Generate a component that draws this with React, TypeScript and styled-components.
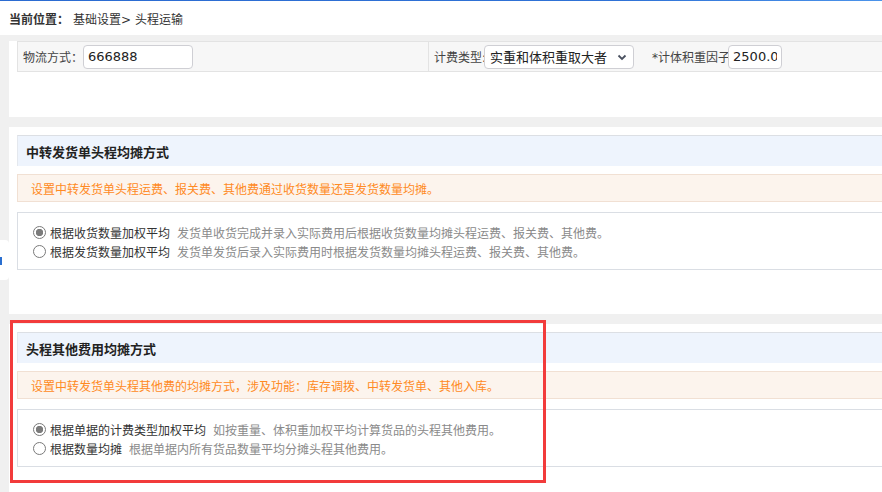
import React, { useState } from "react";
import styled, { createGlobalStyle } from "styled-components";

/**
 * Styles
 */
const GlobalStyle = createGlobalStyle`
  html, body {
    margin: 0;
    padding: 0;
    background: #f0f0f0;
    font-family: "DejaVu Sans", "Noto Sans CJK SC", sans-serif;
    font-size: 12px;
    color: #333;
    overflow: hidden;
  }
  * {
    box-sizing: border-box;
  }
`;

const Page = styled.div`
  position: relative;
  min-height: 100vh;
  overflow: hidden;
`;

const TopLine = styled.div`
  height: 1px;
  background: linear-gradient(to right, #2b6bd1 0%, #2f72d6 70%, #4b93ea 100%);
`;

const Breadcrumb = styled.div`
  height: 34px;
  background: #fff;
  display: flex;
  align-items: center;
  padding-left: 9px;
  font-size: 12px;
  color: #333;
  b {
    font-weight: bold;
    margin-right: 4px;
  }
`;

// content runs past the right edge of the window, like the original page
const Body = styled.div`
  width: calc(100% + 60px);
  display: flex;
  flex-direction: column;
  gap: 10px;
  padding: 6px 0 0 9px;
`;

const Card = styled.div<{ $top: number; $bottom: number }>`
  background: #fff;
  padding: ${(p) => p.$top}px 0 ${(p) => p.$bottom}px 8px;
`;

const FormRow = styled.div`
  display: flex;
  height: 31px;
  background: #f7f7f7;
  border: 1px solid #e3e3e3;
`;

const FormCell = styled.div<{ $width?: number }>`
  display: flex;
  align-items: center;
  padding: 0 5px;
  width: ${(p) => (p.$width ? `${p.$width}px` : "auto")};
  border-right: ${(p) => (p.$width ? "1px solid #e3e3e3" : "none")};
  flex: ${(p) => (p.$width ? "none" : "1")};
`;

const Label = styled.span<{ $gap?: number; $tight?: boolean }>`
  color: #444;
  font-size: 12px;
  white-space: nowrap;
  margin-left: ${(p) => p.$gap || 0}px;
  margin-right: ${(p) => (p.$tight ? -2 : 0)}px;
`;

const TextInput = styled.input<{ $width: number }>`
  width: ${(p) => p.$width}px;
  height: 24px;
  border: 1px solid #cfcfd4;
  border-radius: 4px;
  padding: 0 4px;
  font-family: "DejaVu Sans", "Noto Sans CJK SC", sans-serif;
  font-size: 13px;
  color: #222;
  background: #fff;
  outline: none;
`;

const SelectBox = styled.div`
  position: relative;
  width: 150px;
  height: 24px;
  border: 1px solid #cfcfd4;
  border-radius: 4px;
  background: #fff;
  display: flex;
  align-items: center;
  padding-left: 5px;
  font-size: 13px;
  color: #222;
  svg {
    position: absolute;
    right: 6px;
    top: 8px;
  }
`;

const SectionTitle = styled.div`
  height: 31px;
  display: flex;
  align-items: center;
  padding-left: 8px;
  background: #eef4fd;
  border-top: 1px solid #dcdfe4;
  border-left: 1px solid #e4e8ee;
  font-size: 13px;
  font-weight: bold;
  color: #222;
`;

const Notice = styled.div`
  margin-top: 8px;
  height: 28px;
  display: flex;
  align-items: center;
  padding-left: 13px;
  background: #fcf4ed;
  border: 1px solid #f1e0d3;
  color: #ff8a24;
  font-size: 12px;
`;

const Options = styled.div`
  margin-top: 10px;
  border: 1px solid #dadee4;
  padding: 10px 0 8px 15px;
  display: flex;
  flex-direction: column;
`;

const OptionRow = styled.label`
  display: flex;
  align-items: center;
  height: 19px;
  font-size: 12px;
  color: #333;
  cursor: pointer;
`;

const Radio = styled.input.attrs({ type: "radio" })`
  appearance: none;
  width: 13px;
  height: 13px;
  margin: 0 4px 0 0;
  border: 1px solid #7a7a7a;
  border-radius: 50%;
  background: #fff;
  &:checked {
    background: radial-gradient(circle, #7b7b7b 0 3.4px, #fff 4px);
  }
`;

const Desc = styled.span`
  margin-left: 7px;
  color: #8a8a8a;
`;

const Highlight = styled.div`
  position: absolute;
  left: 10px;
  top: 320px;
  width: 536px;
  height: 163px;
  border: 3px solid #f23b3b;
  pointer-events: none;
`;

const SideTab = styled.div`
  position: absolute;
  left: 0;
  top: 240px;
  width: 9px;
  height: 40px;
  background: #fff;
  border-radius: 0 4px 4px 0;
  &::before {
    content: "";
    position: absolute;
    left: 0;
    top: 17px;
    width: 2px;
    height: 8px;
    background: #2a6fd0;
  }
`;

type Option = { label: string; desc: string };

const shareOptions: Option[] = [
  {
    label: "根据收货数量加权平均",
    desc: "发货单收货完成并录入实际费用后根据收货数量均摊头程运费、报关费、其他费。",
  },
  {
    label: "根据发货数量加权平均",
    desc: "发货单发货后录入实际费用时根据发货数量均摊头程运费、报关费、其他费。",
  },
];

const otherOptions: Option[] = [
  {
    label: "根据单据的计费类型加权平均",
    desc: "如按重量、体积重加权平均计算货品的头程其他费用。",
  },
  {
    label: "根据数量均摊",
    desc: "根据单据内所有货品数量平均分摊头程其他费用。",
  },
];

const Section = ({
  title,
  notice,
  options,
  name,
}: {
  title: string;
  notice: string;
  options: Option[];
  name: string;
}) => {
  const [picked, setPicked] = useState(0);

  return (
    <>
      <SectionTitle>{title}</SectionTitle>
      <Notice>{notice}</Notice>
      <Options>
        {options.map((o, i) => (
          <OptionRow key={o.label}>
            <Radio name={name} checked={picked === i} onChange={() => setPicked(i)} />
            {o.label}
            <Desc>{o.desc}</Desc>
          </OptionRow>
        ))}
      </Options>
    </>
  );
};

const App = () => {
  const [way, setWay] = useState("666888");
  const [factor, setFactor] = useState("2500.0");

  return (
    <Page>
      <GlobalStyle />
      <TopLine />
      <Breadcrumb>
        <b>当前位置：</b>基础设置&gt; 头程运输
      </Breadcrumb>

      <Body>
        <Card $top={0} $bottom={45}>
          <FormRow>
            <FormCell $width={411}>
              <Label>物流方式：</Label>
              <TextInput $width={110} value={way} onChange={(e) => setWay(e.target.value)} />
            </FormCell>
            <FormCell>
              <Label $tight>计费类型:</Label>
              <SelectBox>
                实重和体积重取大者
                <svg width="10" height="7" viewBox="0 0 10 7">
                  <path d="M1.5 1.5 L5 5 L8.5 1.5" fill="none" stroke="#4a5160" strokeWidth="1.8" />
                </svg>
              </SelectBox>
              <Label $gap={18} $tight>
                *计体积重因子
              </Label>
              <TextInput $width={54} value={factor} onChange={(e) => setFactor(e.target.value)} />
            </FormCell>
          </FormRow>
        </Card>

        <Card $top={8} $bottom={44}>
          <Section
            name="transfer"
            title="中转发货单头程均摊方式"
            notice="设置中转发货单头程运费、报关费、其他费通过收货数量还是发货数量均摊。"
            options={shareOptions}
          />
        </Card>

        <Card $top={8} $bottom={44}>
          <Section
            name="other"
            title="头程其他费用均摊方式"
            notice="设置中转发货单头程其他费的均摊方式，涉及功能：库存调拨、中转发货单、其他入库。"
            options={otherOptions}
          />
        </Card>
      </Body>

      <SideTab />
      <Highlight />
    </Page>
  );
};

export default App;
